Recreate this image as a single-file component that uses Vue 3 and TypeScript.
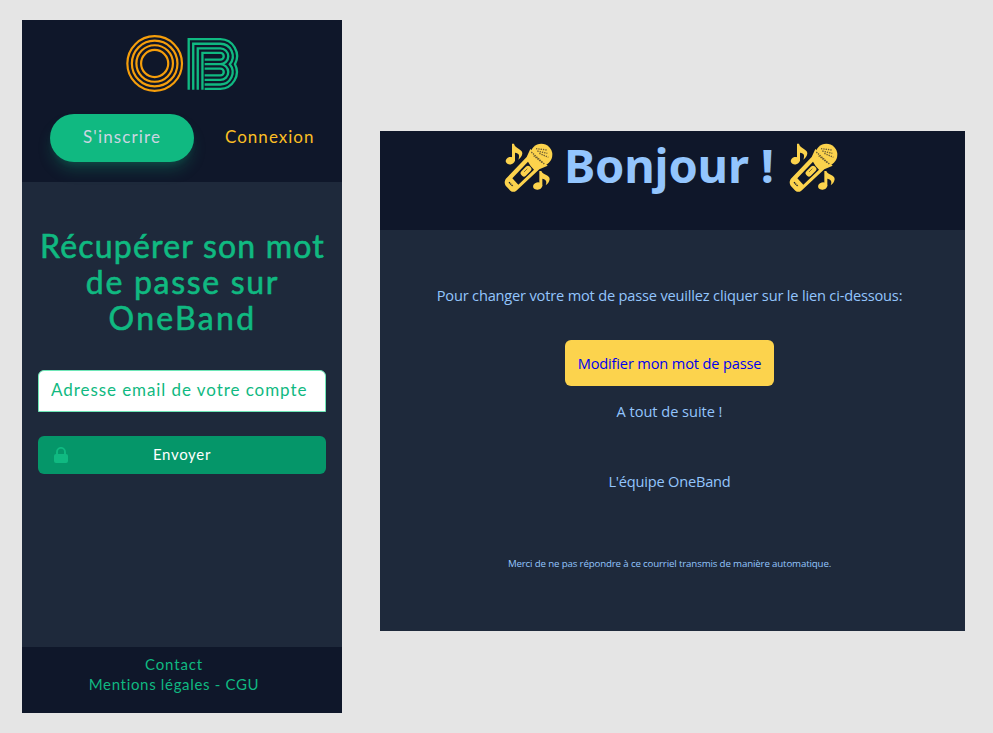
<script setup lang="ts">
import { ref } from 'vue'

const email = ref('')
const titleLines = [
  { text: 'Récupérer son mot', spacing: '1.2px' },
  { text: 'de passe sur', spacing: '1.7px' },
  { text: 'OneBand', spacing: '2.3px' },
]
const micSlots = ['left', 'right']
</script>

<template>
  <main class="board">
    <section class="phone">
      <header class="phone-header">
        <svg class="logo" viewBox="42 34.5 336 170" aria-hidden="true">
          <g fill="none" stroke="#f59e0b" stroke-width="6.5">
            <circle cx="127" cy="119.5" r="81.5" />
            <circle cx="127" cy="119.5" r="68" />
            <circle cx="127" cy="119.5" r="54.5" />
            <circle cx="127" cy="119.5" r="40.5" />
          </g>
          <g fill="none" stroke="#10b981" stroke-width="7">
            <path d="M228.5 198V47H323a50.5 50.5 0 0 1 43.5 74.5A50.5 50.5 0 0 1 323 195H276" />
            <path d="M242 198V60.5H323a37 37 0 0 1 28 61A37 37 0 0 1 323 182H276" />
            <path d="M255.5 198V74.5H323a23.5 23.5 0 0 1 0 47H276M323 121.5a23.5 23.5 0 0 1 0 47H276" />
            <path d="M269.5 198V88H323a10 10 0 0 1 0 20H276M276 135H323a10 10 0 0 1 0 20H276" />
          </g>
        </svg>
        <nav class="nav">
          <a class="signup">S'inscrire</a>
          <a class="login">Connexion</a>
        </nav>
      </header>
      <form class="form" @submit.prevent>
        <h1 class="title">
          <span v-for="line in titleLines" :key="line.text" :style="{ letterSpacing: line.spacing }">{{ line.text }}</span>
        </h1>
        <input v-model="email" class="field" type="email" placeholder="Adresse email de votre compte OneBand">
        <button class="send" type="submit">
          <svg class="lock" viewBox="0 0 14 16" aria-hidden="true">
            <path d="M3 8V4.9a4 4 0 0 1 8 0V8" fill="none" stroke="currentColor" stroke-width="1.9" />
            <rect y="7" width="14" height="9" rx="2" fill="currentColor" />
          </svg>
          <span>Envoyer</span>
        </button>
      </form>
      <footer class="phone-footer">
        <a class="contact">Contact</a>
        <a>Mentions légales - CGU</a>
      </footer>
    </section>

    <section class="mail">
      <header class="mail-header">
        <svg v-for="slot in micSlots" :key="slot" class="mic" :class="slot" viewBox="12 12 147 147" aria-hidden="true">
          <g fill="#fcd34d">
            <path d="M91 30L80 54L17 120Q11 130 17 140L31 155Q40 162 49 155L118 91L143 80Z" />
            <circle cx="124" cy="47" r="33" />
            <ellipse cx="31" cy="65" rx="14" ry="11" transform="rotate(-15 31 65)" />
            <path d="M36 14H42C45 29 67 29 67 43C67 52 60 58 55 62C60 48 57 43 45 41V66H36Z" />
            <ellipse cx="113" cy="141" rx="14" ry="11" transform="rotate(-15 113 141)" />
            <path d="M118 96H124C129 109 150 107 149 121C148 130 142 136 137 139C142 126 137 121 127 119V142H118Z" />
          </g>
          <path d="M84 68L37 118L55 137L102 92Q91 82 84 68Z" fill="#0f172a" />
          <rect x="60" y="87" width="36" height="19" rx="8" transform="rotate(-45 78 96.5)" fill="#fcd34d" />
          <path d="M72 99L82 89" stroke="#8d7635" stroke-width="3" />
          <path d="M27 130L39 142" stroke="#0f172a" stroke-width="4" stroke-dasharray="4 1.5" />
          <g fill="none" stroke="#6b5c34" stroke-width="4" stroke-dasharray="4 3">
            <path d="M108 29L140 33M112 36L142 43M118 43L145 55M94 39L134 76M101 50L127 71" />
          </g>
        </svg>
        <h2 class="hello">Bonjour !</h2>
      </header>
      <div class="mail-body">
        <p class="intro">Pour changer votre mot de passe veuillez cliquer sur le lien ci-dessous:</p>
        <a class="change">Modifier mon mot de passe</a>
        <p class="bye">A tout de suite !</p>
        <p class="team">L'équipe OneBand</p>
        <p class="notice">Merci de ne pas répondre à ce courriel transmis de manière automatique.</p>
      </div>
    </section>
  </main>
</template>

<style>
body { background: #e5e5e5; }
</style>

<style scoped>
* { box-sizing: border-box; }
.board {
  display: flex;
  align-items: flex-start;
  gap: 38px;
  width: 993px;
  height: 733px;
  padding: 20px 28px 0 22px;
  background: #e5e5e5;
}
.phone {
  display: flex;
  flex-direction: column;
  width: 320px;
  height: 693px;
  background: #1e293b;
  font-family: Lato, sans-serif;
}
.phone-header {
  height: 162px;
  padding: 15px 28px 0;
  background: #0f172a;
}
.logo {
  display: block;
  width: 113px;
  height: 57px;
  margin: 0 auto;
}
.nav {
  display: flex;
  align-items: center;
  margin-top: 22px;
  font-size: 17px;
  line-height: 46px;
}
.signup {
  flex: none;
  width: 144px;
  height: 48px;
  padding-left: 33px;
  border-radius: 24px;
  background: #10b981;
  box-shadow: 0 10px 15px -3px rgba(16, 185, 129, .25), 0 4px 6px -2px rgba(16, 185, 129, .12);
  color: #cbd5e1;
  letter-spacing: 1.13px;
}
.login {
  margin: -2px 0 0 31px;
  color: #fbbf24;
  letter-spacing: 1.02px;
  white-space: nowrap;
}
.form {
  flex: 1;
  padding: 46px 16px 0;
}
.title {
  display: flex;
  flex-direction: column;
  align-items: center;
  margin: 0 0 34px;
  padding-left: 1px;
  color: #10b981;
  font-size: 32px;
  font-weight: 400;
  line-height: 36px;
  white-space: nowrap;
  -webkit-text-stroke: .6px #10b981;
}
.field {
  display: block;
  width: 288px;
  height: 42px;
  padding: 0 17px 3px 12px;
  border: 1px solid #6ee7b7;
  border-radius: 6px 6px 0 0;
  outline: none;
  background: #fff;
  color: #10b981;
  font: 17px Lato, sans-serif;
  letter-spacing: .93px;
}
.field::placeholder { color: #10b981; opacity: 1; }
.send {
  display: grid;
  grid-template-columns: 46px 196px 46px;
  align-items: center;
  width: 288px;
  height: 38px;
  margin-top: 24px;
  padding: 0 0 3px;
  border: 0;
  border-radius: 6px;
  background: #059669;
  color: #fff;
  font: 15px Lato, sans-serif;
  letter-spacing: .68px;
}
.lock {
  width: 14px;
  height: 16px;
  margin: 3px 0 0 16px;
  color: #10b981;
}
.phone-footer {
  display: flex;
  flex-direction: column;
  align-items: center;
  height: 66px;
  padding: 7px 16px 0 0;
  background: #0f172a;
  color: #10b981;
  font-size: 15px;
  line-height: 20px;
  letter-spacing: .67px;
}
.contact { letter-spacing: .89px; }
.mail {
  width: 585px;
  height: 500px;
  margin-top: 111px;
  background: #1e293b;
  color: #93c5fd;
  font-family: "Open Sans", sans-serif;
}
.mail-header {
  display: flex;
  align-items: flex-start;
  height: 99px;
  padding: 12px 0 0 124px;
  background: #0f172a;
}
.mic {
  flex: none;
  width: 49px;
  height: 49px;
}
.mic.right { order: 2; }
.hello {
  width: 236px;
  margin: -2px 0 0;
  padding-left: 11px;
  font-family: "Noto Sans", sans-serif;
  font-size: 47px;
  font-weight: 700;
  letter-spacing: -.2px;
  line-height: 48px;
  white-space: nowrap;
}
.mail-body {
  display: flex;
  flex-direction: column;
  align-items: center;
  padding: 55px 6px 0 0;
  font-size: 14.6px;
  line-height: 20px;
  letter-spacing: -.15px;
  white-space: nowrap;
}
.mail-body p { margin: 0; }
.intro { letter-spacing: -.18px; }
.change {
  width: 209px;
  height: 46px;
  margin-top: 35px;
  border-radius: 6px;
  background: #fcd34d;
  color: #0000ee;
  line-height: 47px;
  text-align: center;
}
.mail-body .bye { margin-top: 15px; letter-spacing: -.04px; }
.mail-body .team { margin-top: 50px; letter-spacing: -.2px; }
.mail-body .notice {
  margin-top: 63px;
  font-size: 9.7px;
  letter-spacing: -.14px;
}
</style>
